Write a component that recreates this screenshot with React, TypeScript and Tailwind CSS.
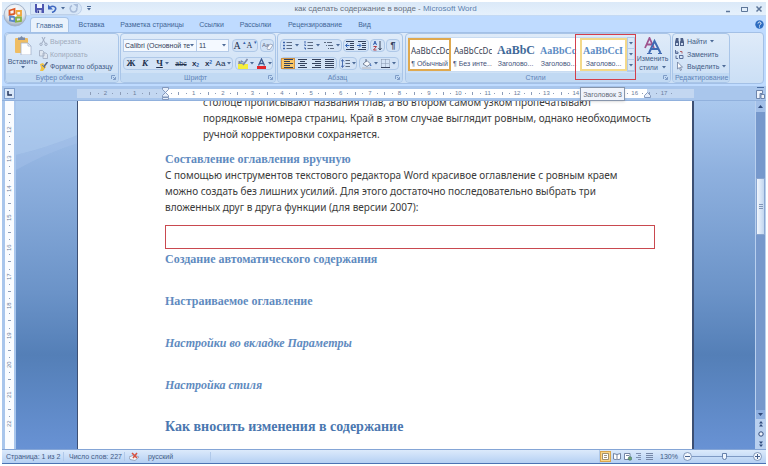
import clsx from "clsx";
import type { ReactNode } from "react";

const tabs = [
	{ title: "Главная", width: "w-[39px]", active: true },
	{ title: "Вставка", width: "w-[45px]" },
	{ title: "Разметка страницы", width: "w-[76px]" },
	{ title: "Ссылки", width: "w-[43px]" },
	{ title: "Рассылки", width: "w-[45px]" },
	{ title: "Рецензирование", width: "w-[74px]" },
	{ title: "Вид", width: "w-[25px]" },
];

const styles = [
	{ sample: "AaBbCcDc", name: "¶ Обычный", font: "text-[8px] font-['Noto_Sans',sans-serif] text-gray-700", frame: "border-[#dfa94f]" },
	{ sample: "AaBbCcDc", name: "¶ Без инте...", font: "text-[8px] font-['Noto_Sans',sans-serif] text-gray-700", frame: "border-white" },
	{
		sample: "AaBbC",
		name: "Заголово...",
		font: "text-[12px] font-bold font-['Liberation_Serif',serif] text-[#3f6a99]",
		frame: "border-white",
	},
	{
		sample: "AaBbCc",
		name: "Заголово...",
		font: "text-[10px] font-bold font-['Liberation_Serif',serif] text-[#5c8cc4]",
		frame: "border-white",
	},
	{
		sample: "AaBbCcI",
		name: "Заголово...",
		font: "text-[10px] font-bold font-['Liberation_Serif',serif] text-[#5c8cc4]",
		frame: "border-[#f3d98a]",
	},
];

const horizontalMarks = Array.from({ length: 20 }, (_, i) => Math.abs(i - 2));
const verticalMarks = Array.from({ length: 11 }, (_, i) => i + 12);

function Arrow() {
	return (
		<svg viewBox="0 0 4 3" className="h-[3px] w-1 shrink-0">
			<path d="M0 0h4L2 2.5z" fill="#4c6a97" />
		</svg>
	);
}

function ToolButton({ label, children, className }: { label: string; children: ReactNode; className?: string }) {
	return (
		<button
			type="button"
			aria-label={label}
			className={clsx("flex h-full shrink-0 items-center justify-center gap-[2px]", className)}
		>
			{children}
		</button>
	);
}

function ToolBox({ children, className }: { children: ReactNode; className?: string }) {
	return (
		<div
			className={clsx(
				"flex h-[13px] shrink-0 items-center rounded-sm border border-[#aec8e8] bg-[#d3e3f6]",
				className,
			)}
		>
			{children}
		</div>
	);
}

function Group({
	title,
	children,
	className,
	launcher = true,
}: {
	title: string;
	children: ReactNode;
	className: string;
	launcher?: boolean;
}) {
	return (
		<section
			className={clsx(
				"flex flex-col overflow-hidden rounded-sm border border-[#a9c5e8] bg-linear-to-b from-[#dfebf9] to-[#cbdff5]",
				className,
			)}
		>
			<div className="flex min-h-0 flex-1">{children}</div>
			<div className="flex h-[9px] items-center bg-[#c1d9f3] px-[2px] text-[#5f84b8]">
				<h2 className="flex-1 text-center">{title}</h2>
				{launcher && (
					<svg viewBox="0 0 5 5" className="size-[5px]" fill="none" stroke="#7e9cc7">
						<path d="M.5 4V.5H4M2 2l2.5 2.5M4.5 2v2.5H2" />
					</svg>
				)}
			</div>
		</section>
	);
}

function Lines({ widths }: { widths: number[] }) {
	return (
		<svg viewBox="0 0 9 9" className="size-[9px]" stroke="#33415c">
			{widths.map((w, i) => (
				<path key={i} d={`M${w < 0 ? 9 + w : 0} ${i * 2 + 0.5}h${Math.abs(w)}`} />
			))}
		</svg>
	);
}

function ListIcon({ kind }: { kind: "bullets" | "numbers" | "levels" }) {
	return (
		<svg viewBox="0 0 10 9" className="h-[9px] w-[10px]" stroke="#5c6a80" fill="none">
			{kind === "levels" ? (
				<path d="M0 1.5h2m1 0h5M2 4.5h1m1 0h5M4 7.5h1m1 0h4" />
			) : (
				<>
					<path d="M3.5 1.5H9m-5.5 3H9m-5.5 3H9" />
					<path
						d={kind === "bullets" ? "M0 1.5h2m-2 3h2m-2 3h2" : "M1 0v2.5M0 4h1.5v1M0 7h1.5v1.5"}
						stroke="#3c63ac"
						strokeWidth={kind === "bullets" ? 1.5 : 1}
					/>
				</>
			)}
		</svg>
	);
}

function IndentIcon({ out }: { out?: boolean }) {
	return (
		<svg viewBox="0 0 10 10" className="size-[10px]" fill="none" stroke="#33415c">
			<path d="M1 .5h8M5 2.5h4M5 4.5h4M5 6.5h4M1 8.5h8" />
			<path d={out ? "M4.5 4.5H1M2.5 2.5l-2 2 2 2" : "M0 4.5h3.5M2 2.5l2 2-2 2"} stroke="#2f62b5" />
		</svg>
	);
}

function TitleBar() {
	return (
		<header className="flex h-[14px] items-center border-b border-[#c4daf4] bg-linear-to-b from-[#dbe9f8] to-[#e6f1fc] pr-[3px] pl-[28px]">
			<div className="flex h-[13px] w-[52px] items-center gap-1 rounded-r-full border border-[#bdd0e9] bg-[#d8e7f8] pl-1">
				<button type="button" aria-label="Сохранить">
					<svg viewBox="0 0 9 9" className="size-[9px]">
						<path d="M0 0h9v9H1L0 8z" fill="#4d56b0" />
						<path d="M2 0h5v4H2z" fill="#f0f4ff" />
						<path d="M2.5 6h4v3h-4z" fill="#cfd5ee" />
						<path d="M3 6.5h1V9H3z" fill="#303a86" />
					</svg>
				</button>
				<button type="button" aria-label="Отменить" className="flex items-center gap-1">
					<svg viewBox="0 0 9 9" className="size-[9px]" fill="none">
						<path d="M2 3.5C5 1 8.5 3 7.5 5.5 7 7 5.5 8 4 8.5" stroke="#4169c1" strokeWidth="1.6" />
						<path d="M0 .5v5h5z" fill="#4169c1" />
					</svg>
					<Arrow />
				</button>
				<button type="button" aria-label="Повторить">
					<svg viewBox="0 0 9 9" className="size-[9px]" fill="none">
						<path d="M3 1.5C0 3 1 7.5 4 8c3 .3 4.5-2 3.5-4.5" stroke="#a9bcd9" strokeWidth="1.6" />
						<path d="M4 0h5v4z" fill="#a9bcd9" />
					</svg>
				</button>
			</div>
			<button type="button" aria-label="Настройка панели" className="ml-1 flex h-2 w-[6px] flex-col items-center justify-center gap-px">
				<span className="h-px w-1 bg-[#4c6a97]" />
				<Arrow />
			</button>
			<h1 className="flex-1 text-center text-[8px] text-[#68717f]">
				как сделать содержание в ворде - <span className="text-[#5b7fae]">Microsoft Word</span>
			</h1>
			<div className="ml-[46px] flex items-center gap-[7px] text-[#5d7699]">
				<button type="button" aria-label="Свернуть">
					<svg viewBox="0 0 8 8" className="size-2" stroke="currentColor">
						<path d="M1 6.5h4" strokeWidth="1.5" />
					</svg>
				</button>
				<button type="button" aria-label="Свернуть в окно">
					<svg viewBox="0 0 8 8" className="size-2" stroke="currentColor" fill="none">
						<path d="M1.5 2.5h6M1.5 2v4.5h6V2" />
					</svg>
				</button>
				<button type="button" aria-label="Закрыть">
					<svg viewBox="0 0 8 8" className="size-2" stroke="currentColor">
						<path d="M1.5 1.5l5 5m0-5l-5 5" strokeWidth="1.5" />
					</svg>
				</button>
			</div>
		</header>
	);
}

function OfficeButton() {
	return (
		<button type="button" aria-label="Кнопка Office" className="absolute top-px left-px">
			<svg viewBox="0 0 24 24" className="size-6">
				<defs>
					<radialGradient id="orb" cx=".5" cy=".3" r=".75">
						<stop offset="0" stopColor="#fff" />
						<stop offset=".6" stopColor="#dfe5ec" />
						<stop offset="1" stopColor="#8c9cb3" />
					</radialGradient>
				</defs>
				<circle cx="12" cy="12" r="11" fill="url(#orb)" stroke="#a3b3ca" />
				<g fill="none" strokeWidth="1.8">
					<path d="M6.5 7.5l5-1.5v5l-5 1z" stroke="#dc5a26" />
					<path d="M13.5 8H18v4.5h-4.5z" stroke="#efa53a" />
					<path d="M7 13.5l4.5.5v4.5l-4.5-1z" stroke="#5c87c8" />
					<path d="M13 14.5h5V18l-5 .8z" stroke="#86b244" />
				</g>
				<circle cx="12.5" cy="12.5" r="1.2" fill="#fff" />
			</svg>
		</button>
	);
}

function TabBar() {
	return (
		<nav className="flex h-[16px] items-end pr-[2px] pl-[28px] text-[#416596]">
			{tabs.map((tab) => (
				<button
					key={tab.title}
					type="button"
					className={clsx(
						"flex h-[15px] shrink-0 items-center justify-center whitespace-nowrap",
						tab.width,
						tab.active && "rounded-t-sm border border-b-0 border-[#a9c5e8] bg-[#e9f2fc]",
					)}
				>
					{tab.title}
				</button>
			))}
			<button type="button" aria-label="Справка" className="mb-[3px] ml-auto">
				<svg viewBox="0 0 9 9" className="size-[9px]">
					<circle cx="4.5" cy="4.5" r="4.2" fill="#2d6cc0" />
					<path d="M3 3.5c0-2 3-2 3 0 0 1-1.5 1-1.5 2M4.5 6.5v1" stroke="#fff" fill="none" />
				</svg>
			</button>
		</nav>
	);
}

function ClipboardGroup() {
	return (
		<Group title="Буфер обмена" className="w-[114px]">
			<button type="button" className="flex w-[33px] shrink-0 flex-col items-center pt-[2px]">
				<svg viewBox="0 0 18 19" className="h-[19px] w-[18px]">
					<rect x="1" y="2" width="13" height="15" rx="1" fill="#efbd63" />
					<path d="M4 3V1.5h2L7.5 0 9 1.5h2V4H4z" fill="#7c8ba6" />
					<path d="M7 7h7l3 3v9H7z" fill="#fdfeff" stroke="#a3b3cc" strokeWidth=".8" />
					<path d="M14 7v3h3" fill="none" stroke="#a3b3cc" strokeWidth=".8" />
				</svg>
				<span className="mt-[2px] text-[#3f5a85]">Вставить</span>
				<Arrow />
			</button>
			<div className="flex flex-col items-start pt-[1px] [&>button]:flex [&>button]:h-[13px] [&>button]:items-center [&>button]:gap-[2px] [&>button]:whitespace-nowrap">
				<button type="button" className="text-[#a0abbc]">
					<svg viewBox="0 0 9 9" className="size-[9px]" fill="none" stroke="#9fabc0">
						<path d="M3 0l3 6M6 0L3 6" />
						<circle cx="2" cy="7.3" r="1.2" />
						<circle cx="7" cy="7.3" r="1.2" />
					</svg>
					Вырезать
				</button>
				<button type="button" className="text-[#a0abbc]">
					<svg viewBox="0 0 9 9" className="size-[9px]" fill="#dfe6f0" stroke="#9fabc0" strokeWidth=".8">
						<path d="M.5.5h3L5 2v4H.5zM4 3h3l1.5 1.5v4H4z" />
					</svg>
					Копировать
				</button>
				<button type="button" className="text-[#3f5a85]">
					<svg viewBox="0 0 9 9" className="size-[9px]">
						<path d="M1 2l3-1 3 4-3 4H1l1-3z" fill="#f0c243" />
						<path d="M8.5 0L5 4.5" stroke="#4e5f88" strokeWidth="1.5" />
						<path d="M3 3l3 3" stroke="#5576ba" />
					</svg>
					Формат по образцу
				</button>
			</div>
		</Group>
	);
}

function FontGroup() {
	return (
		<Group title="Шрифт" className="w-[156px]">
			<div className="flex flex-1 flex-col gap-[5px] px-[2px] pt-[5px] text-[#22314d]">
				<div className="flex">
					<div className="flex h-[13px] w-[74px] items-center border border-[#b5cbe8] bg-[#f4f9ff] pr-[2px]">
						<select aria-label="Шрифт" className="min-w-0 flex-1 appearance-none pl-px text-[#33405a]">
							<option>Calibri (Основной те</option>
						</select>
						<Arrow />
					</div>
					<div className="flex h-[13px] w-[32px] items-center border border-l-0 border-[#b5cbe8] bg-[#f4f9ff] pr-[2px]">
						<select aria-label="Размер" className="min-w-0 flex-1 appearance-none pl-[2px] text-[#33405a]">
							<option>11</option>
						</select>
						<Arrow />
					</div>
					<ToolBox className="ml-[3px] w-[26px] font-['Liberation_Serif',serif]">
						<ToolButton label="Увеличить размер" className="w-[13px] text-[10px]">
							A<sup className="text-[5px] text-[#315fae]">▴</sup>
						</ToolButton>
						<ToolButton label="Уменьшить размер" className="w-[12px] text-[8px]">
							A<sup className="text-[5px] text-[#315fae]">▾</sup>
						</ToolButton>
					</ToolBox>
					<ToolBox className="ml-[2px] w-[14px]">
						<ToolButton label="Очистить формат" className="w-full">
							<svg viewBox="0 0 11 10" className="h-[10px] w-[11px]">
								<text x="0" y="6" fontSize="6" fill="#5c6882">
									Aa
								</text>
								<path d="M5 7l3-4 3 1-3 4.5H5.5z" fill="#f6f7fb" stroke="#8592ac" strokeWidth=".7" />
							</svg>
						</ToolButton>
					</ToolBox>
				</div>
				<div className="flex gap-[2px]">
					<ToolBox className="w-[110px]">
						<ToolButton label="Полужирный" className="w-[14px] font-['Liberation_Serif',serif] text-[9px] font-bold">
							Ж
						</ToolButton>
						<ToolButton label="Курсив" className="w-[14px] font-['Liberation_Serif',serif] text-[9px] font-bold italic">
							К
						</ToolButton>
						<ToolButton label="Подчеркнутый" className="w-[21px] font-['Liberation_Serif',serif] text-[9px] font-bold">
							<span className="underline">Ч</span>
							<Arrow />
						</ToolButton>
						<ToolButton label="Зачеркнутый" className="w-[16px] line-through">
							abc
						</ToolButton>
						<ToolButton label="Подстрочный" className="w-[13px] text-[8px] font-bold">
							<span>
								x<sub className="text-[5px] text-[#315fae]">2</sub>
							</span>
						</ToolButton>
						<ToolButton label="Надстрочный" className="w-[13px] text-[8px] font-bold">
							<span>
								x<sup className="text-[5px] text-[#315fae]">2</sup>
							</span>
						</ToolButton>
						<ToolButton label="Регистр" className="w-[17px] text-[8px]">
							Aa
							<Arrow />
						</ToolButton>
					</ToolBox>
					<ToolBox className="w-[38px]">
						<ToolButton label="Цвет выделения" className="w-[19px]">
							<svg viewBox="0 0 10 11" className="h-[11px] w-[10px]">
								<path d="M0 6h10v5H0z" fill="#f4ee3c" />
								<text x="0" y="5.5" fontSize="5" fill="#39465f">
									ab
								</text>
								<path d="M9.5 1L5 7" stroke="#7e8aa6" strokeWidth="1.6" />
							</svg>
							<Arrow />
						</ToolButton>
						<ToolButton label="Цвет текста" className="w-[18px]">
							<svg viewBox="0 0 9 11" className="h-[11px] w-[9px]">
								<path d="M1.5 7.5L4.5 1l3 6.5M2.5 5.5h4" fill="none" stroke="#3d5b91" strokeWidth="1.3" />
								<path d="M0 8h9v3H0z" fill="#e3262b" />
							</svg>
							<Arrow />
						</ToolButton>
					</ToolBox>
				</div>
			</div>
		</Group>
	);
}

function ParagraphGroup() {
	return (
		<Group title="Абзац" className="w-[126px]">
			<div className="flex flex-1 flex-col gap-[5px] px-[2px] pt-[5px] text-[#33415c]">
				<div className="flex gap-[1px]">
					<ToolBox className="w-[62px]">
						<ToolButton label="Маркеры" className="w-[20px]">
							<ListIcon kind="bullets" />
							<Arrow />
						</ToolButton>
						<ToolButton label="Нумерация" className="w-[21px]">
							<ListIcon kind="numbers" />
							<Arrow />
						</ToolButton>
						<ToolButton label="Многоуровневый список" className="w-[19px]">
							<ListIcon kind="levels" />
							<Arrow />
						</ToolButton>
					</ToolBox>
					<ToolBox className="w-[26px]">
						<ToolButton label="Уменьшить отступ" className="w-[12px]">
							<IndentIcon out />
						</ToolButton>
						<ToolButton label="Увеличить отступ" className="w-[12px]">
							<IndentIcon />
						</ToolButton>
					</ToolBox>
					<ToolBox className="w-[15px]">
						<ToolButton label="Сортировка" className="w-full">
							<svg viewBox="0 0 9 11" className="h-[11px] w-[9px]" fill="none">
								<path d="M.5 5L2 1l1.5 4M1 3.5h2" stroke="#3d66b2" />
								<path d="M.5 6.5h3l-3 3.5h3" stroke="#b13c46" />
								<path d="M7 1v9M5.5 8L7 10l1.5-2" stroke="#3b4861" />
							</svg>
						</ToolButton>
					</ToolBox>
					<ToolBox className="w-[14px]">
						<ToolButton label="Все знаки" className="w-full text-[9px] font-bold">
							¶
						</ToolButton>
					</ToolBox>
				</div>
				<div className="flex gap-[2px]">
					<ToolBox className="w-[57px]">
						<ToolButton label="По левому краю" className="w-[14px] border border-[#d09344] bg-[#fbc767]">
							<Lines widths={[9, 6, 9, 6, 9]} />
						</ToolButton>
						<ToolButton label="По центру" className="w-[14px]">
							<svg viewBox="0 0 9 9" className="size-[9px]" stroke="#33415c">
								<path d="M0 .5h9M2 2.5h5M0 4.5h9M2 6.5h5M0 8.5h9" />
							</svg>
						</ToolButton>
						<ToolButton label="По правому краю" className="w-[14px]">
							<Lines widths={[9, -6, 9, -6, 9]} />
						</ToolButton>
						<ToolButton label="По ширине" className="w-[13px]">
							<Lines widths={[9, 9, 9, 9, 9]} />
						</ToolButton>
					</ToolBox>
					<ToolBox className="w-[18px]">
						<ToolButton label="Интервал" className="w-full">
							<svg viewBox="0 0 9 9" className="size-[9px]" fill="none" stroke="#5c6a80">
								<path d="M4.5 1.5H9m-4.5 3H9m-4.5 3H9" />
								<path d="M1.5 1v7M0 2.5l1.5-2 1.5 2M0 6.5l1.5 2 1.5-2" stroke="#3c63ac" strokeWidth=".9" />
							</svg>
							<Arrow />
						</ToolButton>
					</ToolBox>
					<ToolBox className="w-[40px]">
						<ToolButton label="Заливка" className="w-[19px]">
							<svg viewBox="0 0 10 10" className="size-[10px]">
								<path d="M1 5l4-3.5L8.5 5 5 7.5z" fill="#f7f9fc" stroke="#5f6d88" strokeWidth=".8" />
								<path d="M4 3V0" stroke="#5f6d88" />
								<path d="M8.5 4l1 3H8z" fill="#4672bd" />
								<path d="M0 8h9v2H0z" fill="#c5ccd8" />
							</svg>
							<Arrow />
						</ToolButton>
						<ToolButton label="Границы" className="w-[19px]">
							<svg viewBox="0 0 9 9" className="size-[9px]" fill="none" stroke="#8594ae">
								<path d="M.5.5h8v8M.5.5v8M4.5.5v8M.5 4.5h8" strokeDasharray="1 1" />
								<path d="M0 8.5h9" stroke="#35425d" />
							</svg>
							<Arrow />
						</ToolButton>
					</ToolBox>
				</div>
			</div>
		</Group>
	);
}

function StylesGroup() {
	return (
		<div className="relative ml-px flex">
			<Group title="Стили" className="w-[266px]">
				<div className="mt-[3px] ml-[2px] flex h-[35px] border-y border-[#c9dcf2] bg-white">
					{styles.map((style, i) => (
						<button
							key={i}
							type="button"
							className={clsx(
								"flex w-[43px] shrink-0 flex-col overflow-hidden border-2 pt-[2px] whitespace-nowrap last:w-[47px]",
								style.frame,
							)}
						>
							<span className={clsx("flex h-[17px] items-center overflow-hidden pl-px", style.font)}>{style.sample}</span>
							<span className="text-[#43527a]">{style.name}</span>
						</button>
					))}
				</div>
				<div className="mt-[3px] flex h-[35px] w-2 shrink-0 flex-col border border-[#b5cbe8] bg-[#d9e8f8]">
					{["Вверх", "Вниз", "Ещё"].map((label) => (
						<button
							key={label}
							type="button"
							aria-label={label}
							className="flex flex-1 items-center justify-center border-b border-[#b5cbe8]"
						>
							<Arrow />
						</button>
					))}
				</div>
				<button type="button" className="flex flex-1 flex-col items-center pt-[3px] text-[#3f5a85]">
					<svg viewBox="0 0 18 17" className="h-[17px] w-[18px]" fill="none">
						<path d="M1 11L5.5 1 10 11M3 7.5h5.5" stroke="#a0558e" strokeWidth="1.8" />
						<path d="M5 16l5.5-12L16.5 16M7.5 12h7" stroke="#416bb3" strokeWidth="2" />
						<path d="M3 16.5h5m6 0h4" stroke="#416bb3" />
					</svg>
					<span>Изменить</span>
					<span className="flex items-center gap-1">
						стили <Arrow />
					</span>
				</button>
			</Group>
			{/* selection frame round the third heading style */}
			<div className="pointer-events-none absolute top-px right-[35px] h-[46px] w-[61px] border border-[#d43f4b]" />
			<div
				role="tooltip"
				className="absolute right-[46px] -bottom-[18px] z-10 flex h-[14px] w-[45px] items-center justify-center border border-[#8795ab] bg-[#eff3fb] whitespace-nowrap text-[#5f6775] shadow-sm"
			>
				Заголовок 3
			</div>
		</div>
	);
}

function EditGroup() {
	return (
		<Group title="Редактирование" className="w-[58px]" launcher={false}>
			<div className="flex flex-col items-start pt-[1px] pl-[2px] text-[#3f5a85] [&>button]:flex [&>button]:h-[13px] [&>button]:items-center [&>button]:gap-[3px] [&>button]:whitespace-nowrap">
				<button type="button">
					<svg viewBox="0 0 9 9" className="size-[9px]" fill="#4b5f88">
						<path d="M1 1h2.5v3l.5.5V9H0V5zM5.5 1H8l1 4v4H5V4.5l.5-.5z" />
						<path d="M1 6h2v2H1zM6 6h2v2H6z" fill="#c9d8ef" />
					</svg>
					Найти <Arrow />
				</button>
				<button type="button">
					<svg viewBox="0 0 9 9" className="size-[9px]" fill="none" stroke="#5b6f9b">
						<path d="M.5 0v3.5H3V2H1M4.5 5v3.5H8V5.5H5M1 5.5v3h2" />
						<path d="M5 1.5h2v2" stroke="#b1626a" />
					</svg>
					Заменить
				</button>
				<button type="button">
					<svg viewBox="0 0 9 9" className="size-[9px]">
						<path d="M2.5 0v7l1.8-1.5L5.5 8.5l1-.5-1.2-2.8h2.2z" fill="#fff" stroke="#6d7f9f" strokeWidth=".8" />
					</svg>
					Выделить <Arrow />
				</button>
			</div>
		</Group>
	);
}

function HorizontalRuler() {
	return (
		<div className="flex h-[15px] shrink-0 items-center border-b border-[#91b1dd] bg-[#a9c6ec]">
			<div className="flex w-[14px] justify-center">
				<button type="button" aria-label="Табуляция" className="flex size-[11px] items-center justify-center border border-[#7f9fce] bg-[#d9e7f8]">
					<svg viewBox="0 0 5 5" className="size-[5px]" stroke="#24365c" strokeWidth="1.5" fill="none">
						<path d="M1 0v4h4" />
					</svg>
				</button>
			</div>
			<div className="relative mx-[61px] flex h-[9px] flex-1 bg-[linear-gradient(90deg,#c3d7f1_14.3%,#fff_14.3%,#fff_92.4%,#c3d7f1_92.4%)] pr-[19px] pl-[10px] text-[6px] text-[#6b7d9b]">
				{horizontalMarks.map((mark, i) => (
					<div key={i} className="flex min-w-0 flex-1 items-center [&>*]:flex [&>*]:w-1/4 [&>*]:justify-center">
						<span>
							<i className="h-[3px] w-px bg-[#8d9db8]" />
						</span>
						<span>
							<i className="size-px bg-[#8d9db8]" />
						</span>
						<span>{mark || ""}</span>
						<span>
							<i className="size-px bg-[#8d9db8]" />
						</span>
					</div>
				))}
				<svg viewBox="0 0 7 13" className="absolute -top-[2px] left-[85px] h-[13px] w-[7px]" fill="#e6eefa" stroke="#7c92b8">
					<path d="M.5.5h6v2l-3 3-3-3zM.5 10V8.5l3-3 3 3V10zM.5 10.5h6v2h-6z" strokeWidth=".9" />
				</svg>
				<svg viewBox="0 0 7 6" className="absolute right-[43px] bottom-0 h-[6px] w-[7px]" fill="#e6eefa" stroke="#7c92b8">
					<path d="M.5 5.5v-2l3-3 3 3v2z" strokeWidth=".9" />
				</svg>
			</div>
			<button type="button" aria-label="Линейка" className="flex h-full w-[11px] flex-col items-center justify-center gap-[2px]">
				<i className="h-px w-[7px] bg-[#4a6da3]" />
				<svg viewBox="0 0 9 9" className="size-[9px]" fill="#eef3fb" stroke="#637ba3">
					<path d="M.5.5h6v3H4v5H.5zM5 4.5h3.5v4H5z" strokeWidth=".9" />
				</svg>
			</button>
		</div>
	);
}

function VerticalRuler() {
	return (
		<div className="flex w-[14px] shrink-0 justify-center bg-[#a9c6ec]">
			<div className="flex w-[9px] flex-col bg-[#fafcff] pt-[10px] pb-[14px] text-[6px] text-[#6b7d9b]">
				{verticalMarks.map((mark) => (
					<div key={mark} className="flex min-h-0 flex-1 flex-col [&>*]:flex [&>*]:h-1/4 [&>*]:items-center [&>*]:justify-center">
						<span>
							<i className="h-px w-[3px] bg-[#8d9db8]" />
						</span>
						<span>
							<i className="size-px bg-[#8d9db8]" />
						</span>
						<span className="-rotate-90">{mark}</span>
						<span>
							<i className="size-px bg-[#8d9db8]" />
						</span>
					</div>
				))}
			</div>
		</div>
	);
}

function DocumentPage() {
	return (
		<main className="relative min-w-0 flex-1 overflow-hidden bg-[linear-gradient(#aac8ee,#8fb1df_20%,#6b93c8_55%,#547fb7_73%,#6892d4)] px-[61px]">
			<svg viewBox="0 0 740 348" preserveAspectRatio="none" className="absolute inset-0 size-full">
				<path d="M0 0h62v34Q30 47 0 54z" fill="#b9d2f1" opacity=".45" />
				<path d="M0 54Q30 47 62 34v8Q30 52 0 69z" fill="#a7c4ea" opacity=".4" />
			</svg>
			<article className="relative h-full overflow-hidden border-r-2 border-l border-[#3c4f73] bg-white pr-[37px] pl-[87px] font-['Noto_Sans',sans-serif] text-[10px] leading-4 whitespace-nowrap text-[#3b3b3b]">
				<div className="-mt-[7px] pl-[38px]">
					<p>столбце прописывают названия глав, а во втором самом узком пропечатывают</p>
					<p>порядковые номера страниц. Край в этом случае выглядит ровным, однако необходимость</p>
					<p>ручной корректировки сохраняется.</p>
				</div>
				<h3 className="mt-[9px] font-['Liberation_Serif',serif] text-[12px] leading-4 font-bold text-[#5f8bc0]">
					Составление оглавления вручную
				</h3>
				<p>С помощью инструментов текстового редактора Word красивое оглавление с ровным краем</p>
				<p>можно создать без лишних усилий. Для этого достаточно последовательно выбрать три</p>
				<p>вложенных друг в друга функции (для версии 2007):</p>
				<div className="mt-[10px] h-6 border border-[#c9494f]" />
				<div className="flex flex-col gap-[22px] font-['Liberation_Serif',serif] text-[12px] leading-5 font-bold text-[#5f8bc0]">
					<h3>Создание автоматического содержания</h3>
					<h3>Настраиваемое оглавление</h3>
					<h4 className="italic">Настройки во вкладке Параметры</h4>
					<h4 className="italic">Настройка стиля</h4>
					<h2 className="text-[14px] text-[#4a77b0]">Как вносить изменения в содержание</h2>
				</div>
			</article>
		</main>
	);
}

function ScrollBar() {
	return (
		<div className="flex w-[11px] shrink-0 flex-col bg-[#b9d0ef] px-px text-[#2f4a7c]">
			<button type="button" aria-label="Прокрутить вверх" className="flex h-[11px] items-center justify-center bg-[#a2bfe8]">
				<svg viewBox="0 0 5 3" className="h-[3px] w-[5px]" fill="currentColor">
					<path d="M0 3h5L2.5 0z" />
				</svg>
			</button>
			<div className="flex flex-1 flex-col bg-[#7698cc] pt-[66px]">
				<div className="flex h-[57px] flex-col items-center justify-center gap-px border border-[#8aa6d0] bg-linear-to-r from-[#f1f6fd] to-[#c2d6f0]">
					<i className="h-px w-1 bg-[#8196b9]" />
					<i className="h-px w-1 bg-[#8196b9]" />
					<i className="h-px w-1 bg-[#8196b9]" />
				</div>
			</div>
			<button type="button" aria-label="Прокрутить вниз" className="flex h-[9px] items-center justify-center bg-[#8eafe0]">
				<svg viewBox="0 0 5 3" className="h-[3px] w-[5px]" fill="currentColor">
					<path d="M0 0h5L2.5 3z" />
				</svg>
			</button>
			<button type="button" aria-label="Предыдущая страница" className="flex h-[10px] items-center justify-center">
				<svg viewBox="0 0 4 6" className="h-[6px] w-1" fill="currentColor">
					<path d="M0 2.5L2 0l2 2.5zM0 5.5L2 3l2 2.5z" />
				</svg>
			</button>
			<button type="button" aria-label="Объект перехода" className="flex h-[10px] items-center justify-center">
				<svg viewBox="0 0 6 6" className="size-[6px]" fill="#eef3fb" stroke="currentColor">
					<circle cx="3" cy="3" r="2.2" />
				</svg>
			</button>
			<button type="button" aria-label="Следующая страница" className="flex h-[10px] items-center justify-center">
				<svg viewBox="0 0 4 6" className="h-[6px] w-1" fill="currentColor">
					<path d="M0 .5h4L2 3zM0 3.5h4L2 6z" />
				</svg>
			</button>
		</div>
	);
}

function ZoomStep({ label, plus }: { label: string; plus?: boolean }) {
	return (
		<button type="button" aria-label={label}>
			<svg viewBox="0 0 9 9" className="size-[9px]" fill="#f3f7fd" stroke="#6580ab">
				<circle cx="4.5" cy="4.5" r="4" strokeWidth=".8" />
				<path d={plus ? "M2 4.5h5M4.5 2v5" : "M2 4.5h5"} stroke="#445f8d" />
			</svg>
		</button>
	);
}

function StatusBar() {
	return (
		<footer className="flex h-[15px] shrink-0 items-center border-t border-b border-t-[#84a5d6] border-b-[#4b73b4] bg-linear-to-b from-[#dceafb] to-[#b5d0f3] pr-1 text-[#3f5a85]">
			<span className="w-[62px] border-r border-[#b0c9ea] pl-1">Страница: 1 из 2</span>
			<span className="w-[61px] border-r border-[#b0c9ea] pl-[5px]">Число слов: 227</span>
			<button type="button" aria-label="Правописание" className="ml-[4px]">
				<svg viewBox="0 0 11 9" className="h-[9px] w-[11px]">
					<path d="M0 5l5-2 5 2-4 3.5-5-1z" fill="#f2f4f8" stroke="#8b9ab6" strokeWidth=".8" />
					<path d="M3 1l5 5m0-5L4 6" stroke="#d7503f" strokeWidth="1.5" />
				</svg>
			</button>
			<span className="ml-2 w-[63px] border-r border-[#b0c9ea]">русский</span>
			<div className="ml-auto flex h-full items-center border-l border-[#b0c9ea] [&>button]:flex [&>button]:h-[11px] [&>button]:w-[11px] [&>button]:items-center [&>button]:justify-center">
				<button type="button" aria-label="Разметка" className="border border-[#d9a64d] bg-[#fbd789]">
					<svg viewBox="0 0 7 7" className="size-[7px]" fill="#fff" stroke="#8a7a58">
						<path d="M.5.5h6v6h-6zM2 2.5h3M2 4.5h3" strokeWidth=".8" />
					</svg>
				</button>
				<button type="button" aria-label="Чтение">
					<svg viewBox="0 0 8 7" className="h-[7px] w-2" fill="#fff" stroke="#66789a">
						<path d="M4 1.5L.5.5V6L4 7l3.5-1V.5zM4 1.5V7" strokeWidth=".9" />
					</svg>
				</button>
				<button type="button" aria-label="Веб-документ">
					<svg viewBox="0 0 8 8" className="size-2" fill="#fff" stroke="#66789a">
						<path d="M.5.5H6v6H.5zM2 2.5h3" strokeWidth=".9" />
						<circle cx="6" cy="5.5" r="1.8" fill="#6da06f" stroke="#4c7d72" strokeWidth=".7" />
					</svg>
				</button>
				<button type="button" aria-label="Структура">
					<svg viewBox="0 0 7 7" className="size-[7px]" stroke="#7586a6">
						<path d="M1 .5h5M3 2.5h3M1 4.5h5M3 6.5h3" strokeWidth=".9" />
					</svg>
				</button>
				<button type="button" aria-label="Черновик">
					<svg viewBox="0 0 7 7" className="size-[7px]" stroke="#7586a6">
						<path d="M0 .5h7M0 2.5h7M0 4.5h7M0 6.5h7" />
					</svg>
				</button>
			</div>
			<span className="mx-1 w-5 text-center">130%</span>
			<ZoomStep label="Уменьшить" />
			<input
				type="range"
				aria-label="Масштаб"
				min={0}
				max={100}
				defaultValue={54}
				className="h-[9px] w-[61px] appearance-none bg-transparent bg-[linear-gradient(#7f9ac4,#7f9ac4)] bg-[length:100%_1px] bg-center bg-no-repeat [&::-webkit-slider-thumb]:h-[7px] [&::-webkit-slider-thumb]:w-[5px] [&::-webkit-slider-thumb]:appearance-none [&::-webkit-slider-thumb]:rounded-b-sm [&::-webkit-slider-thumb]:border [&::-webkit-slider-thumb]:border-[#6580ab] [&::-webkit-slider-thumb]:bg-[#eef4fc]"
			/>
			<ZoomStep label="Увеличить" plus />
		</footer>
	);
}

export default function App() {
	return (
		<div className="h-screen bg-white p-[2px]">
			<div className="relative flex h-full flex-col bg-[#bfdbff] font-['Liberation_Sans',sans-serif] text-[7px] leading-[9px]">
				<TitleBar />
				<OfficeButton />
				<TabBar />
				<div className="mx-[2px] flex h-[52px] shrink-0 gap-px rounded-sm border border-[#a3c0e6] bg-linear-to-b from-[#dfebf9] to-[#cbdff5]">
					<ClipboardGroup />
					<FontGroup />
					<ParagraphGroup />
					<StylesGroup />
					<EditGroup />
				</div>
				<div className="h-[2px] shrink-0" />
				<HorizontalRuler />
				<div className="flex min-h-0 flex-1">
					<VerticalRuler />
					<DocumentPage />
					<ScrollBar />
				</div>
				<StatusBar />
			</div>
		</div>
	);
}
